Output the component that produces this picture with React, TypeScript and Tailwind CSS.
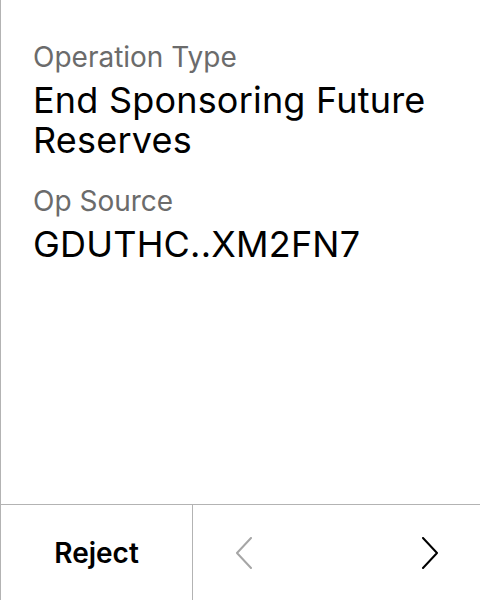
import React from 'react';

const Field: React.FC<{ label: string; value: string }> = ({ label, value }) => (
  <div>
    <div className="text-[28px] leading-[32px] text-[#6b6b6b] mb-[7px]">{label}</div>
    <div className="text-[36px] leading-[40px] tracking-[0.2px] text-black">{value}</div>
  </div>
);

const Chevron: React.FC<{ dir: 'left' | 'right'; color: string }> = ({ dir, color }) => (
  <svg width="18" height="32" viewBox="0 0 18 32" fill="none">
    <path
      d={dir === 'left' ? 'M16 1 L2 16 L16 31' : 'M2 1 L16 16 L2 31'}
      stroke={color}
      strokeWidth="2"
      strokeLinecap="round"
      strokeLinejoin="round"
    />
  </svg>
);

export default function App() {
  return (
    <div
      className="h-[600px] w-[480px] flex flex-col bg-white border-l border-[#b3b3b3]"
      style={{ fontFamily: 'Inter, "Noto Sans", sans-serif' }}
    >
      <div className="flex-1 px-[32px] pt-[41px] flex flex-col gap-[25px]">
        <Field label="Operation Type" value="End Sponsoring Future Reserves" />
        <Field label="Op Source" value="GDUTHC..XM2FN7" />
      </div>
      <div className="h-[96px] flex border-t border-[#b3b3b3]">
        <button className="w-[191px] flex items-center justify-center text-[28px] font-semibold text-black">
          Reject
        </button>
        <div className="flex-1 flex items-center justify-between pl-[42px] pr-[41px] border-l border-[#b3b3b3]">
          <Chevron dir="left" color="#a6a6a6" />
          <Chevron dir="right" color="#000000" />
        </div>
      </div>
    </div>
  );
}
